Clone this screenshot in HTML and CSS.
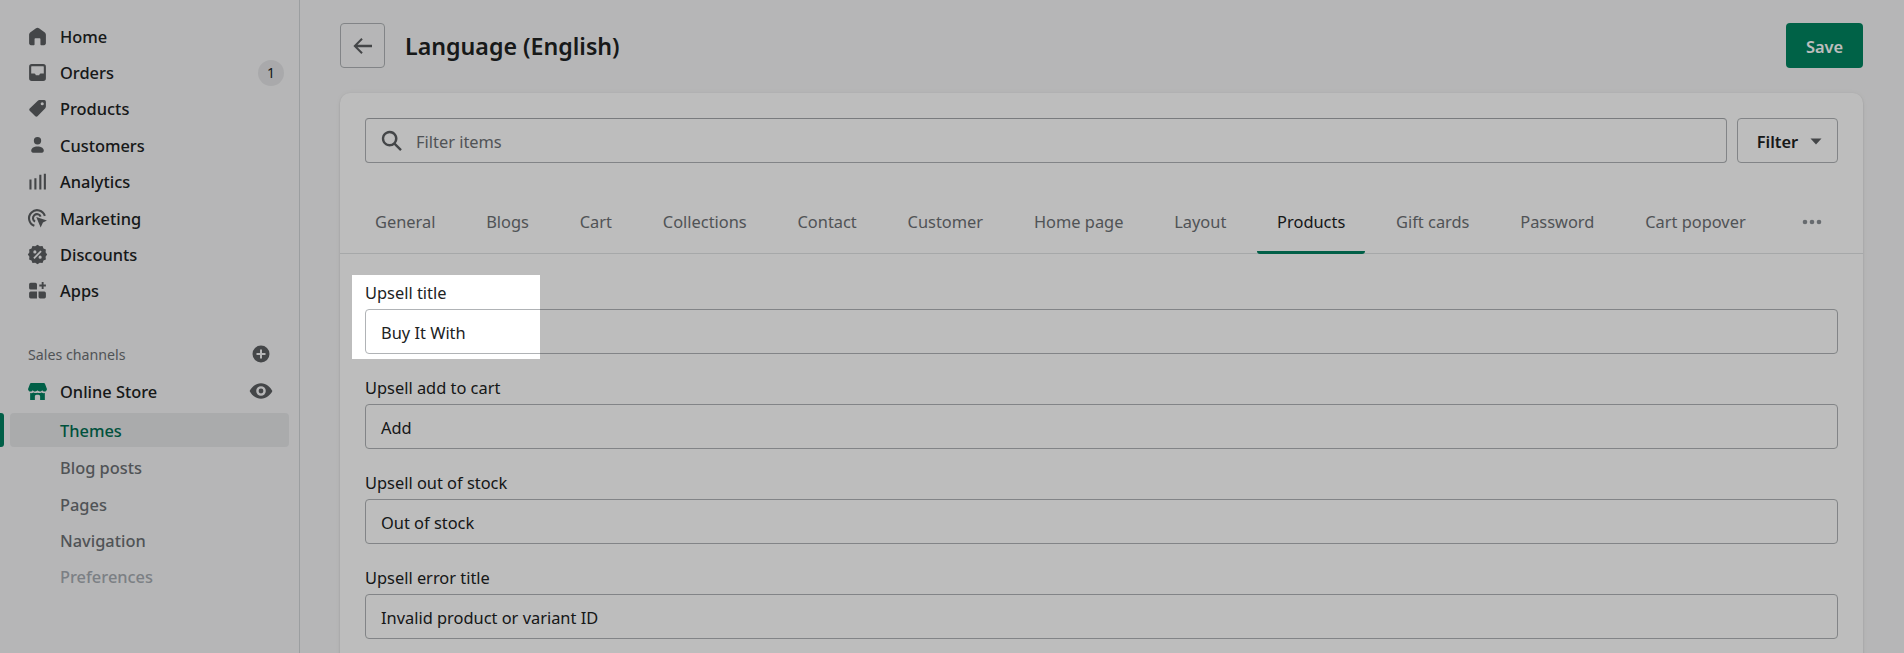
FILE: index.html
```html
<!DOCTYPE html>
<html lang="en">
<head>
<meta charset="utf-8">
<title>Language (English)</title>
<link rel="stylesheet" href="styles.css">
</head>
<body>
<div class="app">
  <nav class="sidebar">
    <ul class="nav-list">
      <li class="nav-row"><svg class="icon" viewBox="0 0 20 20"><path d="M10 1.600c.5 0 1 .2 1.400.5l5.300 3.900c.8.600 1.300 1.500 1.300 2.500v8c0 1-.8 1.800-1.800 1.800h-2.400c-.6 0-1-.4-1-1v-4.600c0-.6-.4-1-1-1H8.200c-.6 0-1 .4-1 1v4.600c0 .6-.4 1-1 1H3.800C2.800 18.300 2 17.500 2 16.500v-8c0-1 .5-1.900 1.300-2.500l5.300-3.900c.4-.3.900-.5 1.400-.5z"/></svg><span>Home</span></li>
      <li class="nav-row"><svg class="icon" viewBox="0 0 20 20"><path fill-rule="evenodd" d="M4.500 2h11A2.500 2.500 0 0 1 18 4.500v11a2.500 2.500 0 0 1-2.500 2.500h-11A2.500 2.500 0 0 1 2 15.500v-11A2.500 2.500 0 0 1 4.500 2zm0 2C4.200 4 4 4.200 4 4.500V11h3c.5 0 .8.300 1 .7l.4.800h3.200l.4-.8c.2-.4.500-.7 1-.7h3V4.500c0-.3-.2-.5-.5-.5h-11z"/></svg><span>Orders</span><b class="badge">1</b></li>
      <li class="nav-row"><svg class="icon" viewBox="0 0 20 20"><path fill-rule="evenodd" d="M11.800 2H16.500A1.500 1.500 0 0 1 18 3.500v4.700c0 .6-.2 1.100-.6 1.500l-7.400 7.700c-.6.600-1.500.6-2.100 0l-5.300-5.300c-.6-.6-.6-1.500 0-2.100L10.300 2.600C10.700 2.200 11.200 2 11.800 2zM14.500 4a1.500 1.500 0 1 0 0 3 1.500 1.500 0 0 0 0-3z"/></svg><span>Products</span></li>
      <li class="nav-row"><svg class="icon" viewBox="0 0 20 20"><circle cx="10" cy="5.500" r="3.500"/><path d="M4 15c0-2.500 2.500-4 6-4s6 1.500 6 4c0 1.500-1.500 2-3 2H7c-1.500 0-3-.5-3-2z"/></svg><span>Customers</span></li>
      <li class="nav-row"><svg class="icon" viewBox="0 0 20 20"><path d="M2.300 8h2v9.500h-2zM7 7h2v10.500H7zM11.700 3.500h2v14h-2zM16 2.500h2v15h-2z"/></svg><span>Analytics</span></li>
      <li class="nav-row"><svg class="icon" viewBox="0 0 20 20"><path class="ring" d="M17 7.500A7.700 7.700 0 1 0 7 17"/><path class="ring" d="M13 8.200A3.800 3.800 0 1 0 7.700 13"/><path d="M8.800 8.500 19 11.800 15.200 13.800 13 18.500z"/></svg><span>Marketing</span></li>
      <li class="nav-row"><svg class="icon" viewBox="0 0 20 20"><path fill-rule="evenodd" d="M10 .8l2.200 1.400 2.600-.4.900 2.400 2.300 1-.3 2.600L19.200 10l-1.500 2.200.3 2.600-2.300 1-.9 2.400-2.600-.4L10 19.200l-2.200-1.400-2.600.4-.9-2.400-2.300-1 .3-2.600L.8 10l1.500-2.200L2 5.200l2.300-1 .9-2.400 2.600.4L10 .8zM12.800 6.200 6 13l1.200 1.200L14 7.400zM7.500 6A1.500 1.500 0 1 0 7.500 9 1.500 1.500 0 0 0 7.500 6zM12.500 11a1.500 1.500 0 1 0 0 3 1.500 1.500 0 0 0 0-3z"/></svg><span>Discounts</span></li>
      <li class="nav-row"><svg class="icon" viewBox="0 0 20 20"><path d="M3.500 2.500H8A1.500 1.500 0 0 1 9.500 4v5H3.500A1.500 1.500 0 0 1 2 7.500V4a1.500 1.500 0 0 1 1.500-1.500zM2 12.500A1.500 1.500 0 0 1 3.500 11H9.500v6.500H3.500A1.500 1.500 0 0 1 2 16zM11 11h5.500A1.500 1.500 0 0 1 18 12.500V16a1.500 1.500 0 0 1-1.500 1.500H12.500A1.500 1.500 0 0 1 11 16zM14 2h1.800v2.300H18v1.800h-2.200v2.400H14V6.100h-2.300V4.300H14z"/></svg><span>Apps</span></li>
    </ul>
    <div class="channel-head"><span>Sales channels</span><svg class="icon-sm" viewBox="0 0 20 20"><path fill-rule="evenodd" d="M10 1.500a8.500 8.500 0 1 1 0 17 8.500 8.500 0 0 1 0-17zM9 5.500V9H5.500v2H9v3.500h2V11h3.500V9H11V5.500z"/></svg></div>
    <div class="nav-row store-row"><svg class="icon icon-green" viewBox="0 0 20 20"><path d="M4 2h12c.6 0 1 .3 1.200.8L19 7.500c0 1.400-1 2.500-2.300 2.500-.9 0-1.700-.5-2.200-1.200-.5.700-1.400 1.200-2.300 1.200-.9 0-1.700-.4-2.200-1.100-.5.700-1.300 1.100-2.200 1.100-.9 0-1.800-.5-2.300-1.200C5 9.500 4.200 10 3.300 10 2 10 1 8.900 1 7.500l1.800-4.700C3 2.300 3.400 2 4 2z"/><path d="M3 11.500c1.100.2 2.200 0 3.200-.5 1.200.7 2.700.7 3.800.1 1.100.6 2.600.6 3.800-.1 1 .5 2.100.7 3.200.5V18h-4.500v-3.500c0-.8-.7-1.500-1.500-1.500H9c-.8 0-1.500.7-1.500 1.500V18H3z"/></svg><span>Online Store</span><svg class="icon-eye" viewBox="0 0 20 20"><path fill-rule="evenodd" d="M10 3.500c4.500 0 8 3.400 9.500 6.500-1.500 3.100-5 6.500-9.500 6.500S2 13.100.5 10C2 6.900 5.500 3.500 10 3.500zM10 6a4 4 0 1 0 0 8 4 4 0 0 0 0-8zM10 8a2 2 0 1 1 0 4 2 2 0 0 1 0-4z"/></svg></div>
    <ul class="sub-list">
      <li class="sub-row is-active">Themes</li>
      <li class="sub-row">Blog posts</li>
      <li class="sub-row">Pages</li>
      <li class="sub-row">Navigation</li>
      <li class="sub-row is-muted">Preferences</li>
    </ul>
  </nav>
  <main class="main">
    <header class="page-head">
      <button class="back-btn" type="button"><svg class="icon-lg" viewBox="0 0 20 20"><path d="M17.500 9H5.400l4.400-4.400-1.200-1.200L2 10l6.600 6.600 1.200-1.200L5.400 11h12.100z"/></svg></button>
      <h1 class="title">Language (English)</h1>
      <button class="save-btn" type="button">Save</button>
    </header>
    <section class="card">
      <div class="filter-bar">
        <div class="search"><svg class="icon-lg" viewBox="0 0 20 20"><path fill-rule="evenodd" d="M8 1.500a6.500 6.500 0 0 1 5.200 10.400l5 5-1.400 1.400-5-5A6.500 6.500 0 1 1 8 1.500zm0 2a4.500 4.500 0 1 0 0 9 4.500 4.500 0 0 0 0-9z"/></svg><span>Filter items</span></div>
        <button class="filter-btn" type="button">Filter<svg class="caret" viewBox="0 0 12 7"><path d="M.5.500h11L6 6.500z"/></svg></button>
      </div>
      <div class="tabs">
        <span class="tab">General</span>
        <span class="tab">Blogs</span>
        <span class="tab">Cart</span>
        <span class="tab">Collections</span>
        <span class="tab">Contact</span>
        <span class="tab">Customer</span>
        <span class="tab">Home page</span>
        <span class="tab">Layout</span>
        <span class="tab is-active">Products</span>
        <span class="tab">Gift cards</span>
        <span class="tab">Password</span>
        <span class="tab">Cart popover</span>
        <svg class="dots" viewBox="0 0 20 6"><circle cx="3" cy="3" r="2.300"/><circle cx="10" cy="3" r="2.300"/><circle cx="17" cy="3" r="2.300"/></svg>
      </div>
      <div class="fields">
        <div class="field"><label class="label">Upsell title</label><div class="input">Buy It With</div></div>
        <div class="field"><label class="label">Upsell add to cart</label><div class="input">Add</div></div>
        <div class="field"><label class="label">Upsell out of stock</label><div class="input">Out of stock</div></div>
        <div class="field"><label class="label">Upsell error title</label><div class="input">Invalid product or variant ID</div></div>
      </div>
    </section>
  </main>
</div>
<div class="spotlight"></div>
</body>
</html>
```

FILE: styles.css
```css
* { box-sizing: border-box; }
html, body { margin: 0; height: 100%; overflow: hidden; }
body {
  font-family: "Noto Sans", "Open Sans", Arial, sans-serif;
  font-size: 16.4px;
  color: #202223;
  background: #f6f6f7;
}
ul { list-style: none; margin: 0; padding: 0; }
button { font: inherit; color: inherit; background: none; cursor: pointer; }
.app { display: flex; height: 653px; overflow: hidden; }

.sidebar {
  flex: 0 0 300px;
  border-right: 1px solid #d2d5d8;
  padding-top: 18px;
  background: #f6f6f7;
}
.nav-list { display: grid; grid-auto-rows: 36.4px; }
.nav-row {
  display: flex;
  align-items: center;
  padding: 0 15px 0 27px;
  gap: 12px;
  font-weight: 500;
}
.icon { width: 21px; height: 21px; flex: none; fill: #5c5f62; }
.icon .ring { fill: none; stroke: #5c5f62; stroke-width: 2; }
.icon-green { fill: #008060; }
.icon-lg { width: 24px; height: 24px; flex: none; fill: #5c5f62; }
.icon-sm { width: 20px; height: 20px; flex: none; fill: #5c5f62; }
.icon-eye { width: 24px; height: 24px; flex: none; fill: #5c5f62; margin-left: auto; margin-right: 4px; }
.badge {
  margin-left: auto;
  width: 26px;
  height: 26px;
  border-radius: 50%;
  background: #e4e5e7;
  display: flex;
  align-items: center;
  justify-content: center;
  font-size: 14px;
  font-weight: 400;
}
.channel-head {
  display: flex;
  justify-content: space-between;
  align-items: center;
  margin-top: 32px;
  padding: 0 28px;
  height: 26px;
  font-size: 14.2px;
  color: #6d7175;
}
.store-row { height: 36px; margin-top: 6px; padding-right: 22px; }
.sub-list { display: grid; grid-auto-rows: 36.4px; margin-top: 4px; }
.sub-row { padding-left: 60px; display: flex; align-items: center; color: #6d7175; font-weight: 500; position: relative; }
.sub-row.is-active { color: #006e52; background: #e6e7e9; margin: 0 10px; padding-left: 50px; border-radius: 4px; height: 34px; }
.sub-row.is-active::before { content: ""; position: absolute; left: -10px; top: 0; bottom: 0; width: 4px; background: #008060; border-radius: 0 3px 3px 0; }
.sub-row.is-muted { color: #a6acb2; }

.main { flex: 1; min-width: 0; padding: 23px 41px 0 40px; }
.page-head { display: flex; align-items: center; height: 45px; }
.back-btn {
  width: 45px; height: 45px;
  border: 1px solid #b0b3b6;
  border-radius: 4px;
  display: flex; align-items: center; justify-content: center;
  padding: 0;
}
.title { margin: 1px 0 0 20px; font-size: 23.2px; font-weight: 600; flex: 1; }
.save-btn {
  width: 77px; height: 45px;
  border: 0;
  border-radius: 4px;
  padding: 2px 0 0;
  background: #008560;
  color: #fff;
  font-weight: 600;
}
.card {
  margin-top: 25px;
  background: #fff;
  border-radius: 10px;
  box-shadow: 0 0 5px rgba(23,24,24,.05), 0 1px 2px rgba(0,0,0,.15);
  height: 700px;
}
.filter-bar { display: flex; gap: 10px; padding: 25px 25px 0; }
.search {
  flex: 1;
  height: 45px;
  border: 1px solid #b0b3b6;
  border-top-color: #a4a7aa;
  border-radius: 4px;
  display: flex; align-items: center;
  padding: 1px 0 0 14px;
  gap: 12px;
  color: #6d7175;
}
.filter-btn {
  flex: 0 0 101px;
  height: 45px;
  border: 1px solid #b0b3b6;
  border-radius: 4px;
  padding: 1px 0 0 4px;
  font-weight: 600;
  display: flex; align-items: center; justify-content: center;
  gap: 12px;
}
.caret { width: 12px; height: 7px; fill: #5c5f62; }
.tabs {
  display: flex;
  align-items: stretch;
  height: 91px;
  padding: 0 15px;
  gap: 10.8px;
  border-bottom: 1px solid #e1e3e5;
}
.tab {
  padding: 28px 20px 0;
  margin-bottom: -1px;
  line-height: 61px;
  color: #6d7175;
  white-space: nowrap;
  border-bottom: 3px solid transparent;
  border-radius: 0 0 3px 3px;
}
.tab.is-active { color: #202223; border-bottom-color: #008060; }
.dots { width: 20px; height: 6px; fill: #8c9196; align-self: flex-start; margin: 56px 26px 0 auto; }
.fields { padding: 24px 25px 0; display: grid; grid-auto-rows: 95px; }
.label { display: block; height: 31px; line-height: 30px; }
.input {
  height: 45px;
  border: 1px solid #b0b3b6;
  border-radius: 4px;
  display: flex; align-items: center;
  padding-left: 15px;
  padding-top: 1px;
}
.spotlight {
  position: absolute;
  left: 352px; top: 275px;
  width: 188px; height: 84px;
  box-shadow: 0 0 0 3000px rgba(0,0,0,.26);
}
```
